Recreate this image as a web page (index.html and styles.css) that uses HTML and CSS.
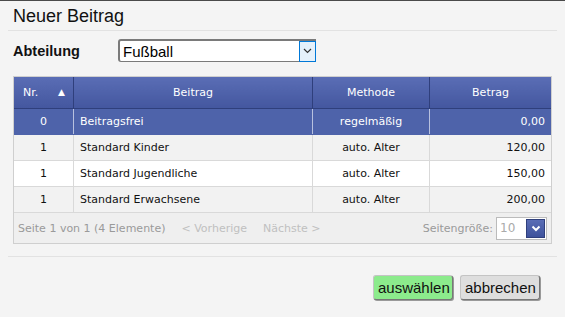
FILE: index.html
```html
<!DOCTYPE html>
<html lang="de">
<head>
    <meta charset="UTF-8">
    <title>Neuer Beitrag</title>
    <link rel="stylesheet" href="styles.css">
</head>
<body>
    <div class="dialog">
        <h1 class="title">Neuer Beitrag</h1>

        <div class="field">
            <label class="field-label">Abteilung</label>
            <div class="combo">
                <span class="combo-text">Fußball</span>
                <span class="combo-btn">
                    <svg width="9" height="6" viewBox="0 0 9 6"><path d="M1 1 L4.5 4.5 L8 1" fill="none" stroke="#333" stroke-width="1.2"/></svg>
                </span>
            </div>
        </div>

        <div class="grid">
            <table class="grid-table">
                <thead>
                    <tr>
                        <th class="col-nr">Nr. <span class="sort">&#9650;</span></th>
                        <th class="col-name">Beitrag</th>
                        <th class="col-method">Methode</th>
                        <th class="col-amount">Betrag</th>
                    </tr>
                </thead>
                <tbody>
                    <tr class="selected">
                        <td class="c">0</td>
                        <td>Beitragsfrei</td>
                        <td class="c">regelmäßig</td>
                        <td class="r">0,00</td>
                    </tr>
                    <tr class="alt">
                        <td class="c">1</td>
                        <td>Standard Kinder</td>
                        <td class="c">auto. Alter</td>
                        <td class="r">120,00</td>
                    </tr>
                    <tr>
                        <td class="c">1</td>
                        <td>Standard Jugendliche</td>
                        <td class="c">auto. Alter</td>
                        <td class="r">150,00</td>
                    </tr>
                    <tr class="alt">
                        <td class="c">1</td>
                        <td>Standard Erwachsene</td>
                        <td class="c">auto. Alter</td>
                        <td class="r">200,00</td>
                    </tr>
                </tbody>
            </table>
            <div class="pager">
                <span class="pager-info">Seite 1 von 1 (4 Elemente)</span>
                <span class="pager-link">&lt; Vorherige</span>
                <span class="pager-link">Nächste &gt;</span>
                <span class="pager-size">Seitengröße:</span>
                <div class="size-box">
                    <span class="size-text">10</span>
                    <span class="size-btn">
                        <svg width="10" height="7" viewBox="0 0 10 7"><path d="M1.5 1.5 L5 5 L8.5 1.5" fill="none" stroke="#fff" stroke-width="2"/></svg>
                    </span>
                </div>
            </div>
        </div>

        <div class="actions">
            <button class="btn btn-ok">auswählen</button>
            <button class="btn btn-cancel">abbrechen</button>
        </div>
    </div>
</body>
</html>
```

FILE: styles.css
```css
body {
    margin: 0;
    background: #f4f4f4;
    font-family: "Liberation Sans", Arial, sans-serif;
}

.dialog {
    height: 316px;
    border-top: 1px solid #4a4a4a;
    background: #f4f4f4;
}

.title {
    margin: 0 8px;
    padding: 6px 5px 5px;
    font-size: 18px;
    font-weight: normal;
    line-height: 18px;
    color: #111;
    border-bottom: 1px solid #e2e2e2;
}

.field {
    display: flex;
    align-items: center;
    padding: 8px 13px 0;
}

.field-label {
    width: 105px;
    font-size: 14.5px;
    font-weight: bold;
    color: #111;
}

.combo {
    display: flex;
    align-items: center;
    width: 195px;
    height: 20px;
    background: #fff;
    border: 1px solid #7a7a7a;
    border-top-width: 2px;
    border-left-width: 2px;
    border-radius: 3px 0 0 3px;
}

.combo-text {
    flex: 1;
    padding-left: 3px;
    font-size: 15px;
    color: #000;
}

.combo-btn {
    display: flex;
    align-items: center;
    justify-content: center;
    width: 15px;
    height: 19px;
    background: #e5f1fb;
    border: 1px solid #0078d7;
    margin-right: -1px;
}

.grid {
    margin: 14px 13px 0;
    border: 1px solid #cfcfcf;
    background: #efefef;
}

.grid-table {
    width: 100%;
    border-collapse: collapse;
    font-family: "DejaVu Sans", Verdana, sans-serif;
    font-size: 11px;
    color: #111;
}

.grid-table th {
    height: 31px;
    padding: 0 6px;
    font-weight: normal;
    color: #fff;
    background: linear-gradient(#5a6db5, #44579f);
    border-left: 1px solid #2f3f7c;
    border-bottom: 1px solid #2f3f7c;
    text-align: center;
}

.grid-table th:first-child {
    border-left: none;
    text-align: left;
    padding-left: 9px;
    padding-right: 8px;
}

.sort {
    float: right;
    font-size: 9px;
    margin-top: 1px;
}

.col-nr { width: 42px; }
.col-name { width: 226px; }
.col-method { width: 104px; }

.grid-table td {
    height: 25px;
    padding: 0 6px;
    background: #fff;
    border-left: 1px solid #d9d9d9;
    border-bottom: 1px solid #d9d9d9;
}

.grid-table td:first-child {
    border-left: none;
}

.grid-table tr.alt td {
    background: #f2f2f2;
}

.grid-table tr.selected td {
    background: #4e63aa;
    color: #fff;
    border-left-color: #b8c1df;
    border-bottom-color: #4e63aa;
}

.grid-table td.c { text-align: center; }
.grid-table td.r { text-align: right; padding-right: 6px; }

.pager {
    display: flex;
    align-items: center;
    height: 30px;
    padding: 0 4px;
    font-family: "DejaVu Sans", Verdana, sans-serif;
    font-size: 11px;
    color: #9a9a9a;
}

.pager-info {
    margin-right: 16px;
}

.pager-link {
    color: #c0c0c0;
    margin-right: 16px;
}

.pager-size {
    margin-left: auto;
    margin-right: 3px;
}

.size-box {
    display: flex;
    align-items: center;
    width: 49px;
    height: 21px;
    background: #fff;
    border: 1px solid #bbb;
    margin-right: 0;
}

.size-text {
    flex: 1;
    padding-left: 3px;
    color: #aaa;
    font-size: 12px;
}

.size-btn {
    display: flex;
    align-items: center;
    justify-content: center;
    width: 17px;
    height: 17px;
    margin-right: 1px;
    background: linear-gradient(#5a6db5, #3e529c);
    border: 1px solid #2f3f7c;
}

.actions {
    display: flex;
    justify-content: flex-end;
    gap: 7px;
    margin: 12px 8px 0;
    padding: 18px 17px 0 0;
    border-top: 1px solid #e2e2e2;
}

.btn {
    height: 25px;
    padding: 0 4px;
    font-family: "Liberation Sans", Arial, sans-serif;
    font-size: 15px;
    color: #111;
    border: 1px solid #c4c4c4;
    border-right-color: #777;
    border-bottom-color: #777;
    border-radius: 3px;
    box-shadow: 1px 1px 0 #999;
}

.btn-ok {
    width: 80px;
    background: #8ceb8c;
}

.btn-cancel {
    width: 80px;
    background: #dedede;
}
```
